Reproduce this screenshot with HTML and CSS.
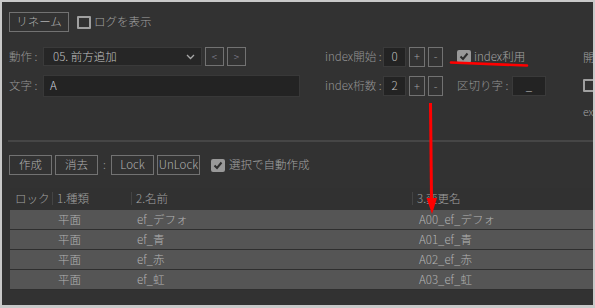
FILE: index.html
```html
<!DOCTYPE html>
<html lang="ja">
<head>
<meta charset="utf-8">
<link rel="stylesheet" href="styles.css">
</head>
<body>
<div class="panel">
  <div class="top">
    <div class="row1">
      <div class="btn rename">リネーム</div>
      <div class="chk-wrap"><span class="chk"></span><span class="chk-label">ログを表示</span></div>
    </div>
    <div class="grid">
      <div class="col-left">
        <div class="frow r19">
          <span class="lbl lbl-l">動作 :</span>
          <div class="select"><span>05. 前方追加</span>
            <svg class="chev" width="9" height="6" viewBox="0 0 9 6"><path d="M1 1 L4.5 4.5 L8 1" fill="none" stroke="#a8a8a8" stroke-width="1.3"/></svg>
          </div>
          <div class="btn sq">&lt;</div>
          <div class="btn sq">&gt;</div>
        </div>
        <div class="frow r22">
          <span class="lbl lbl-l">文字 :</span>
          <div class="input">A</div>
        </div>
      </div>
      <div class="col-mid">
        <div class="frow r19">
          <span class="lbl lbl-m">index開始 :</span>
          <div class="num">0</div>
          <div class="btn pm">+</div>
          <div class="btn pm">-</div>
          <div class="chk-wrap ml"><span class="chk on"><svg width="10" height="9" viewBox="0 0 10 9"><path d="M1.5 4.5 L4 7 L8.5 1.5" fill="none" stroke="#2e2e2e" stroke-width="2"/></svg></span><span class="chk-label">index利用</span></div>
        </div>
        <div class="frow r22">
          <span class="lbl lbl-m">index桁数 :</span>
          <div class="num">2</div>
          <div class="btn pm">+</div>
          <div class="btn pm">-</div>
          <span class="lbl sepl">区切り字 :</span>
          <div class="num wide">_</div>
        </div>
      </div>
      <div class="col-right">
        <span class="lbl rt1">開</span>
        <span class="chk rchk"></span>
        <span class="lbl rt2">ex</span>
      </div>
    </div>
  </div>
  <div class="sep"></div>
  <div class="toolbar">
    <div class="btn tb">作成</div>
    <div class="btn tb">消去</div>
    <span class="colon">:</span>
    <div class="btn tb">Lock</div>
    <div class="btn tb">UnLock</div>
    <div class="chk-wrap ml2"><span class="chk on"><svg width="10" height="9" viewBox="0 0 10 9"><path d="M1.5 4.5 L4 7 L8.5 1.5" fill="none" stroke="#2e2e2e" stroke-width="2"/></svg></span><span class="chk-label">選択で自動作成</span></div>
  </div>
  <div class="table">
    <div class="thead">
      <div class="c c1">ロック</div>
      <div class="c c2">1.種類</div>
      <div class="c c3">2.名前</div>
      <div class="c c4">3.変更名</div>
    </div>
    <div class="tr"><div class="c c1"></div><div class="c c2">平面</div><div class="c c3">ef_デフォ</div><div class="c c4">A00_ef_デフォ</div></div>
    <div class="tr"><div class="c c1"></div><div class="c c2">平面</div><div class="c c3">ef_青</div><div class="c c4">A01_ef_青</div></div>
    <div class="tr"><div class="c c1"></div><div class="c c2">平面</div><div class="c c3">ef_赤</div><div class="c c4">A02_ef_赤</div></div>
    <div class="tr"><div class="c c1"></div><div class="c c2">平面</div><div class="c c3">ef_虹</div><div class="c c4">A03_ef_虹</div></div>
  </div>
</div>
<svg class="annot" width="595" height="308" viewBox="0 0 595 308">
  <path d="M451 62.5 L527 65.5" stroke="#ff0000" stroke-width="2.6" stroke-linecap="round" fill="none"/>
  <path d="M430.5 103 L431.5 200" stroke="#ff0000" stroke-width="3" fill="none"/>
  <path d="M426.5 198 L437 198 L432 214 Z" fill="#ff0000"/>
</svg>
</body>
</html>
```
FILE: styles.css
```css
* { box-sizing: border-box; }
html, body { margin: 0; padding: 0; }
body {
  width: 595px;
  height: 308px;
  background: #c9c9c9;
  position: relative;
  overflow: hidden;
  font-family: "Noto Sans CJK JP", "Noto Sans", sans-serif;
  font-size: 11.5px;
  font-weight: 300;
  color: #959595;
}
.panel {
  margin: 2px 2px 0 2px;
  width: 591px;
  height: 303px;
  background: #323232;
  overflow: hidden;
}
.top { padding: 10px 0 0 7px; }
.row1 { display: flex; align-items: center; height: 20px; }
.btn {
  display: flex;
  align-items: center;
  justify-content: center;
  border: 1px solid #727272;
  background: #323232;
  color: #b0b0b0;
  line-height: 1;
  flex-shrink: 0;
}
.rename { width: 60px; height: 20px; }
.chk-wrap { display: flex; align-items: center; }
.row1 .chk-wrap { margin-left: 8px; }
.chk {
  width: 14px;
  height: 13px;
  border: 2px solid #a0a0a0;
  border-radius: 1px;
  display: flex;
  align-items: center;
  justify-content: center;
  flex-shrink: 0;
}
.chk.on { background: #999; border-color: #999; border-radius: 2px; }
.chk-label { margin-left: 3px; color: #a2a2a2; line-height: 1; }

.grid { display: flex; margin-top: 15px; }
.col-left { width: 291px; flex-shrink: 0; display: flex; flex-direction: column; gap: 9px; }
.col-mid { width: 258px; flex-shrink: 0; margin-left: 25px; display: flex; flex-direction: column; gap: 9px; }
.col-right { flex-shrink: 0; display: flex; flex-direction: column; align-items: flex-start; }
.frow { display: flex; align-items: center; }
.r19 { height: 19px; }
.r22 { height: 22px; }
.lbl { line-height: 1; color: #959595; white-space: nowrap; }
.lbl-l { width: 34px; flex-shrink: 0; }
.lbl-m { width: 58px; flex-shrink: 0; }
.select {
  width: 159px;
  height: 19px;
  flex-shrink: 0;
  background: #262626;
  border: 1px solid #3a3a3a;
  display: flex;
  align-items: center;
  justify-content: space-between;
  padding: 0 6px 0 9px;
  color: #c0c0c0;
  line-height: 1;
}
.chev { display: block; }
.sq { width: 19px; height: 19px; margin-left: 3px; color: #9090a0; font-size: 10px; }
.input {
  width: 257px;
  height: 22px;
  flex-shrink: 0;
  background: #232323;
  border: 1px solid #383838;
  display: flex;
  align-items: center;
  padding-left: 6px;
  color: #c8ccd8;
  line-height: 1;
}
.num {
  width: 23px;
  height: 20px;
  flex-shrink: 0;
  background: #232323;
  border: 1px solid #3a3a3a;
  display: flex;
  align-items: center;
  justify-content: center;
  color: #c0c0c0;
  line-height: 1;
}
.num.wide { width: 34px; margin-left: 5px; }
.pm { width: 16px; height: 20px; margin-left: 3px; font-size: 11px; color: #a0a0a0; }
.pm + .pm { width: 15px; }
.ml { margin-left: 14px; }
.sepl { margin-left: 14px; width: 50px; }
.rt1 { margin-top: 5px; color: #a0a0a0; }
.rchk { margin-top: 15px; }
.rt2 { margin-top: 15px; color: #a0a0a0; font-size: 10.5px; }

.sep { margin: 23px 0 0 6px; height: 2px; background: #464646; }
.toolbar { display: flex; align-items: center; margin: 13px 0 0 7px; height: 20px; }
.tb { width: 43px; height: 20px; }
.tb + .tb { margin-left: 3px; }
.colon { width: 13px; text-align: center; line-height: 1; color: #959595; }
.ml2 { margin-left: 11px; }
.ml2 .chk-label { margin-left: 4px; }

.table { margin: 13px 0 0 8px; background: #2b2b2b; height: 100px; }
.thead { display: flex; height: 22px; background: #313131; align-items: center; }
.thead .c { position: relative; color: #a0a0a0; padding-left: 5px; }
.thead .c + .c::before {
  content: "";
  position: absolute;
  left: 0;
  top: -1px;
  width: 1px;
  height: 13px;
  background: #444;
}
.c { line-height: 1; white-space: nowrap; }
.c1 { width: 42px; flex-shrink: 0; }
.c2 { width: 79px; flex-shrink: 0; }
.c3 { width: 281px; flex-shrink: 0; }
.c4 { flex: 1; }
.tr {
  display: flex;
  align-items: center;
  height: 20px;
  background: #555;
  border-bottom: 1px solid #2f2f2f;
  color: #b2b2b2;
}
.tr .c { padding-left: 6px; }
.tr .c4 { padding-left: 7px; }

.annot { position: absolute; left: 0; top: 0; pointer-events: none; }
```
